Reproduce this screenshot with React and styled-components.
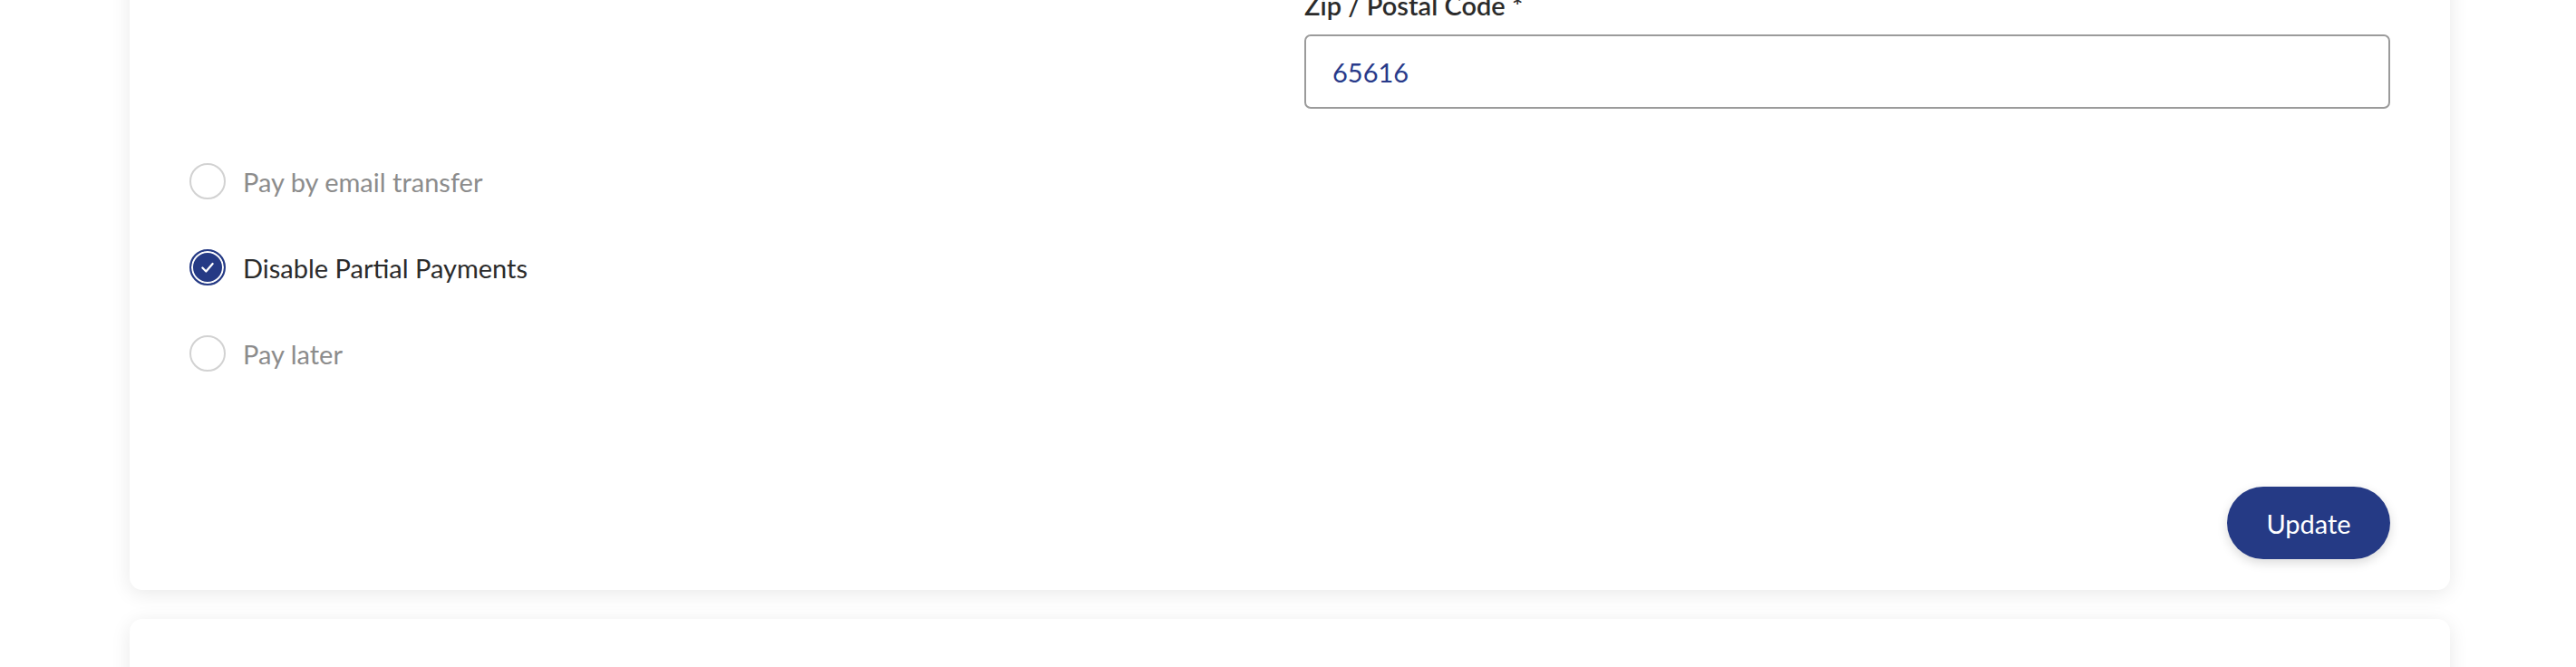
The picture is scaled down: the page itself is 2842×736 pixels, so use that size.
import React from 'react';
import styled, { createGlobalStyle } from 'styled-components';

const GlobalStyle = createGlobalStyle`
  body {
    margin: 0;
    background: #ffffff;
    font-family: Lato, "Open Sans", sans-serif;
    overflow: hidden;
  }
`;

const NAVY = '#253a85';

const options = [
  { label: 'Pay by email transfer', checked: false },
  { label: 'Disable Partial Payments', checked: true },
  { label: 'Pay later', checked: false },
];

export default function App() {
  return <>
    <GlobalStyle />
    <Page>
      <Card>
        <FormGrid>
          <div />
          <Field>
            <FieldLabel>Zip / Postal Code *</FieldLabel>
            <TextInput readOnly value="65616" />
          </Field>
        </FormGrid>
        <RadioList>
          {options.map((opt, index) =>
            <RadioRow key={index} checked={opt.checked}>
              <Circle checked={opt.checked}>
                {opt.checked &&
                  <svg width="18" height="18" viewBox="0 0 16 16">
                    <polyline points="3,8.5 6.5,12 13,4.5" fill="none" stroke="#fff" strokeWidth="2" strokeLinecap="round" strokeLinejoin="round" />
                  </svg>}
              </Circle>
              <span>{opt.label}</span>
            </RadioRow>
          )}
        </RadioList>
        <Actions>
          <Boton>Update</Boton>
        </Actions>
      </Card>
      <NextCard />
    </Page>
  </>
}

const Page = styled.div`
  margin-top: -62px;
  padding-left: 143px;
  width: 2560px;
`;

const Card = styled.div`
  background: #ffffff;
  border-radius: 14px;
  box-shadow: 0 4px 22px rgba(0, 0, 0, 0.09);
  padding: 48px 66px 34px;
`;

const NextCard = styled(Card)`
  margin-top: 32px;
  height: 200px;
  padding: 0;
`;

const FormGrid = styled.div`
  display: grid;
  grid-template-columns: 1fr 1fr;
  gap: 32px;
`;

const Field = styled.div`
  display: flex;
  flex-direction: column;
`;

const FieldLabel = styled.label`
  font-size: 29px;
  line-height: 40px;
  font-weight: 600;
  color: #2b2b2b;
  margin-bottom: 12px;
`;

const TextInput = styled.input`
  box-sizing: border-box;
  height: 82px;
  width: 100%;
  border: 2px solid #9b9b9b;
  border-radius: 7px;
  padding: 0 29px;
  font-family: inherit;
  font-size: 29px;
  color: #283a8a;
  background: #fff;
  outline: none;
`;

const RadioList = styled.div`
  display: flex;
  flex-direction: column;
  gap: 55px;
  margin-top: 60px;
`;

const RadioRow = styled.label`
  display: flex;
  align-items: center;
  gap: 19px;
  height: 40px;
  font-size: 29px;
  color: ${p => p.checked ? '#2b2b2b' : '#8c8c8c'};
`;

const Circle = styled.span`
  box-sizing: border-box;
  width: 40px;
  height: 40px;
  border-radius: 50%;
  display: flex;
  align-items: center;
  justify-content: center;
  border: 2px solid ${p => p.checked ? NAVY : '#d2d2d2'};
  background: ${p => p.checked ? NAVY : '#fff'};
  box-shadow: ${p => p.checked ? 'inset 0 0 0 2px #fff' : 'none'};
`;

const Actions = styled.div`
  display: flex;
  justify-content: flex-end;
  margin-top: 127px;
`;

const Boton = styled.button`
  width: 180px;
  height: 80px;
  border: none;
  border-radius: 40px;
  background: ${NAVY};
  color: #fff;
  font-family: inherit;
  font-size: 29px;
  box-shadow: 0 4px 12px rgba(0, 0, 0, 0.15);
`;
